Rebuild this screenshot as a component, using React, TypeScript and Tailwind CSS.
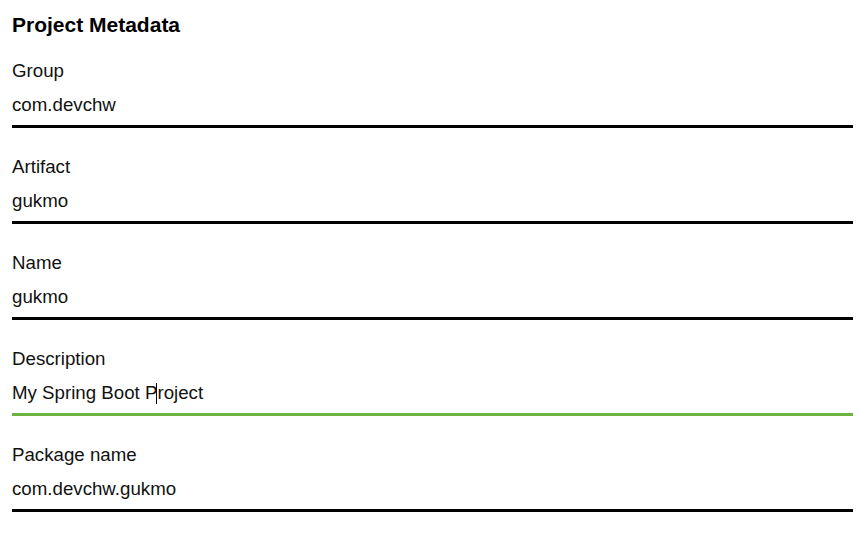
import React from "react";

const fields: { label: string; value: string; active?: boolean }[] = [
  { label: "Group", value: "com.devchw" },
  { label: "Artifact", value: "gukmo" },
  { label: "Name", value: "gukmo" },
  { label: "Description", value: "My Spring Boot Project", active: true },
  { label: "Package name", value: "com.devchw.gukmo" },
];

export default function App() {
  return (
    <div
      className="w-[861px] h-[533px] bg-white text-black pt-[11px] pl-[12px] pr-[8px]"
      style={{ fontFamily: '"Liberation Sans", Arial, sans-serif' }}
    >
      <div className="text-[21px] font-bold leading-[28px]">Project Metadata</div>
      {fields.map((f, i) => (
        <div
          key={f.label}
          className={
            (i === 0 ? "pt-[20px] " : "pt-[27px] ") +
            "pb-[8px] border-b-[3px] " +
            (f.active ? "border-[#6db33f]" : "border-black")
          }
        >
          <div className="text-[18.7px] leading-[24px] text-[#111]">{f.label}</div>
          <div className="mt-[10px] text-[18.7px] leading-[24px] text-[#111]">
            {f.active ? (
              <>
                My Spring Boot P
                <span className="relative inline-block w-0 h-[20px] align-middle">
                  <span className="absolute left-[-1px] top-[-1px] w-px h-[21px] bg-black" />
                </span>
                roject
              </>
            ) : (
              f.value
            )}
          </div>
        </div>
      ))}
    </div>
  );
}
